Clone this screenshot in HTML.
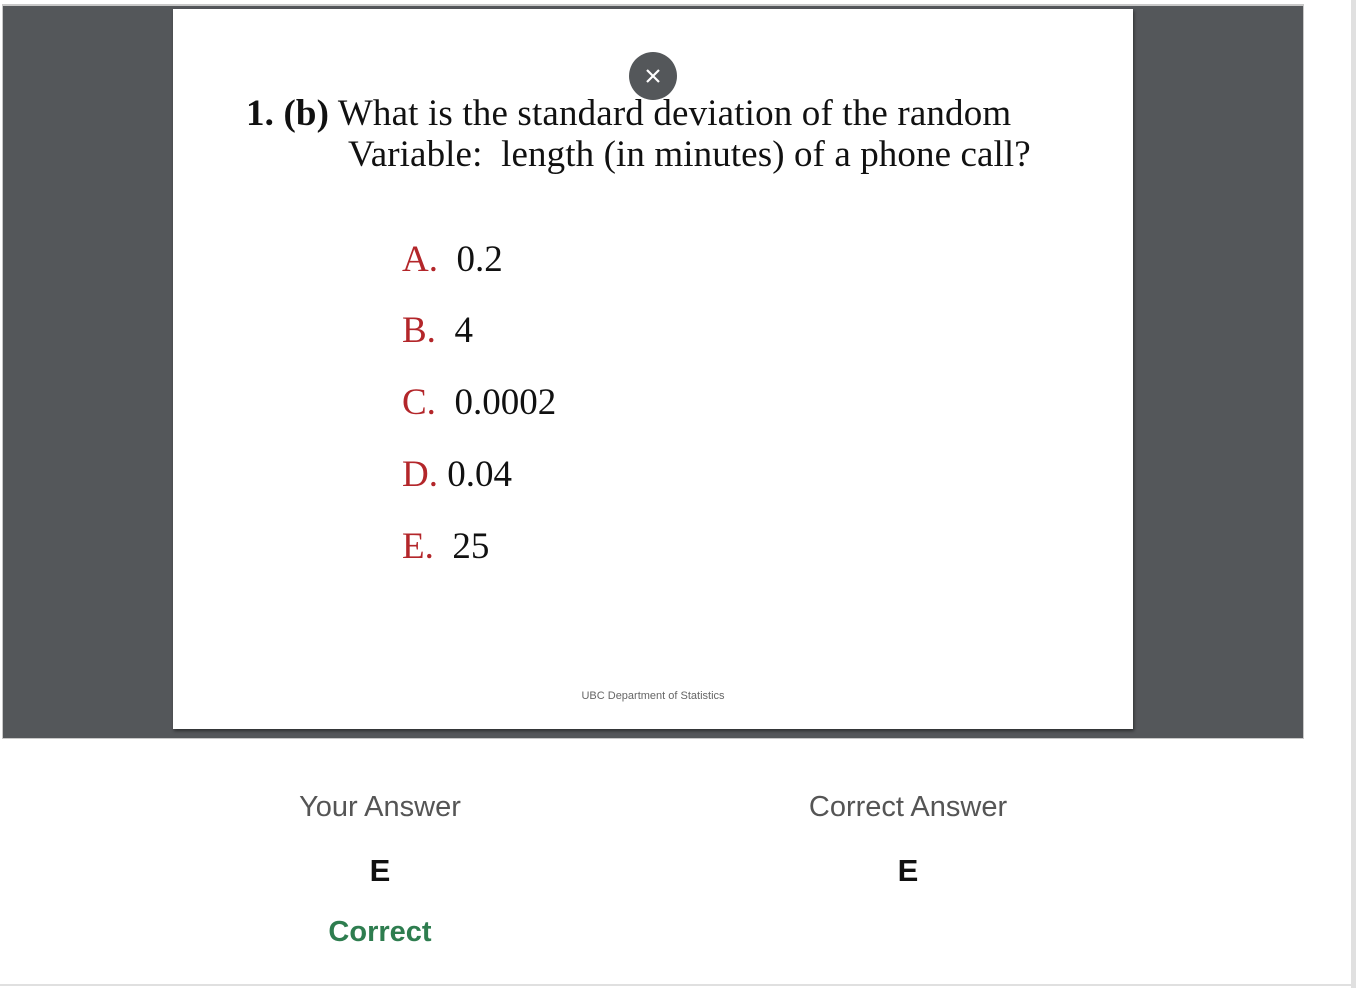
<!DOCTYPE html>
<html><head><meta charset="utf-8"><style>
body{margin:0;width:1356px;height:988px;background:#fff;position:relative;overflow:hidden;font-family:"Liberation Sans",sans-serif}
.frame{position:absolute;left:2px;top:4px;width:1300px;height:732px;background:#54575a;border:1px solid #c8c8c8;border-top:2px solid #c8c8c8}
.slide{position:absolute;left:173px;top:9px;width:960px;height:720px;background:#fff;box-shadow:1px 2px 3px rgba(0,0,0,.45)}
.serif{font-family:"Liberation Serif",serif;color:#111;position:absolute;white-space:nowrap}
.q{font-size:37px;line-height:40px;letter-spacing:0.15px}
.opt{font-size:37px;left:229px}
.opt span{color:#b3262a}
.x{position:absolute;left:629px;top:52px;width:48px;height:48px;border-radius:50%;background:#54575a}
.rbar{position:absolute;right:0;top:0;width:5px;height:988px;background:#e0e0e0}
.bline{position:absolute;left:0;top:984px;width:1351px;height:2px;background:#e0e0e0}
.lbl{position:absolute;font-size:29px;color:#555;width:400px;text-align:center}
.ans{position:absolute;font-size:31px;color:#111;width:400px;text-align:center;font-weight:600}
</style></head><body>
<div class="frame"></div>
<div class="slide">
<div class="serif q" style="left:73px;top:85px"><b>1. (b)</b> What is the standard deviation of the random</div>
<div class="serif q" style="left:175px;top:126px;letter-spacing:0.1px">Variable:&nbsp; length (in minutes) of a phone call?</div>
<div class="serif opt" style="top:229px"><span>A.</span>&nbsp; 0.2</div>
<div class="serif opt" style="top:300px"><span>B.</span>&nbsp; 4</div>
<div class="serif opt" style="top:372px"><span>C.</span>&nbsp; 0.0002</div>
<div class="serif opt" style="top:444px"><span>D.</span> 0.04</div>
<div class="serif opt" style="top:516px"><span>E.</span>&nbsp; 25</div>
<div style="position:absolute;left:0;width:960px;top:681px;text-align:center;font-size:11px;color:#666">UBC Department of Statistics</div>
</div>
<div class="x"><svg width="48" height="48"><path d="M18 18L30 30M30 18L18 30" stroke="#fff" stroke-width="2.2"/></svg></div>
<div class="lbl" style="left:180px;top:791px">Your Answer</div>
<div class="lbl" style="left:708px;top:791px">Correct Answer</div>
<div class="ans" style="left:180px;top:853px">E</div>
<div class="ans" style="left:708px;top:853px">E</div>
<div class="lbl" style="left:180px;top:916px;color:#2e7d4f;font-size:29px;font-weight:600">Correct</div>
<div class="rbar"></div>
<div class="bline"></div>
</body></html>
